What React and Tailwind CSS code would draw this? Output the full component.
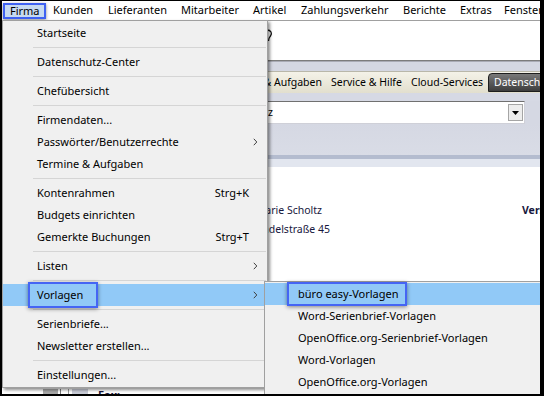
import React from 'react';

const topMenu = [
  { label: 'Firma', w: 43 },
  { label: 'Kunden', w: 55 },
  { label: 'Lieferanten', w: 73 },
  { label: 'Mitarbeiter', w: 72 },
  { label: 'Artikel', w: 48 },
  { label: 'Zahlungsverkehr', w: 102 },
  { label: 'Berichte', w: 57 },
  { label: 'Extras', w: 44 },
  { label: 'Fenster', w: 60 },
];

const firmaItems = [
  { label: 'Startseite' },
  { sep: true },
  { label: 'Datenschutz-Center' },
  { sep: true },
  { label: 'Chefübersicht' },
  { sep: true },
  { label: 'Firmendaten...' },
  { label: 'Passwörter/Benutzerrechte', sub: true },
  { label: 'Termine & Aufgaben' },
  { sep: true },
  { label: 'Kontenrahmen', shortcut: 'Strg+K' },
  { label: 'Budgets einrichten' },
  { label: 'Gemerkte Buchungen', shortcut: 'Strg+T' },
  { sep: true },
  { label: 'Listen', sub: true },
  { sep: true },
  { label: 'Vorlagen', sub: true, active: true },
  { sep: true },
  { label: 'Serienbriefe...' },
  { label: 'Newsletter erstellen...' },
  { sep: true },
  { label: 'Einstellungen...' },
];

const vorlagenItems = [
  'büro easy-Vorlagen',
  'Word-Serienbrief-Vorlagen',
  'OpenOffice.org-Serienbrief-Vorlagen',
  'Word-Vorlagen',
  'OpenOffice.org-Vorlagen',
];

const Chevron = () => (
  <svg width="5" height="8" viewBox="0 0 5 8">
    <path d="M0.8 0.8 L3.8 4 L0.8 7.2" fill="none" stroke="#404040" strokeWidth="1" />
  </svg>
);

const App = () => {
  return (
    <div className="relative w-[544px] h-[396px] overflow-hidden bg-white font-['Noto_Sans',sans-serif] text-black">
      {/* Menubar */}
      <div className="flex h-[21px] border-b border-[#a0a0a0] pl-[3px] text-[11px]">
        {topMenu.map((m, i) =>
          i === 0 ? (
            <div
              key={m.label}
              className="mt-[3px] flex h-[16px] w-[43px] shrink-0 items-center border-2 border-[#3f62f2] bg-[#c6daf1] pl-[5px] shadow-[0_1px_3px_rgba(0,0,0,0.45)]"
            >
              {m.label}
            </div>
          ) : (
            <div key={m.label} style={{ width: m.w }} className="flex shrink-0 items-center pl-[7px] whitespace-nowrap">
              {m.label}
            </div>
          )
        )}
      </div>

      {/* Toolbar area */}
      <div className="relative h-[39px] bg-white">
        <svg className="absolute left-[266px] top-[8px]" width="8" height="14" viewBox="0 0 8 14">
          <path d="M1 1 C5 1 6.5 4.5 4.5 7 C3.5 8.2 2.5 9 2.5 12" fill="none" stroke="#111" strokeWidth="1.3" />
        </svg>
      </div>
      <div className="h-[1px] bg-[#7c7c7c]" />
      <div className="h-[1px] bg-[#a9abb5]" />
      <div className="h-[9px] bg-[#d4d7e2]" />

      {/* Tab strip */}
      <div className="flex h-[22px] border-t border-[#b9b7a9] bg-gradient-to-b from-[#f4f2e8] to-[#e2dfce] text-[10.5px]">
        <div className="flex w-[329px] shrink-0 items-center justify-end pr-[7px] whitespace-nowrap">Termine &amp; Aufgaben</div>
        <div className="flex w-[80px] shrink-0 items-center pl-[2px] whitespace-nowrap">Service &amp; Hilfe</div>
        <div className="flex w-[79px] shrink-0 items-center pl-[2px] whitespace-nowrap">Cloud-Services</div>
        <div className="mt-[1px] flex h-[19px] w-[70px] shrink-0 items-center rounded-tl-[4px] border border-[#1e1e1e] bg-gradient-to-b from-[#7a7a7a] to-[#3e3e3e] pl-[5px] text-white whitespace-nowrap">
          Datenschutz
        </div>
      </div>
      <div className="h-[8px] bg-[#d6d9e4]" />

      {/* Combo row */}
      <div className="flex h-[23px] bg-[#d5d8e3]">
        <div className="flex h-full w-[525px] items-center border border-[#cfd0d8] border-t-[#707070] bg-white text-[10.5px]">
          <span className="w-[272px] shrink-0 text-right whitespace-nowrap">Marie Scholtz</span>
          <div className="ml-auto mr-[1px] flex h-[17px] w-[15px] items-center justify-center border border-[#a5a5a5] bg-[#ededed]">
            <svg width="7" height="4" viewBox="0 0 7 4">
              <path d="M0 0 H7 L3.5 4 Z" fill="#000" />
            </svg>
          </div>
        </div>
      </div>
      <div className="h-[31px] bg-gradient-to-b from-[#d5d8e3] to-[#d9dce6]" />
      <div className="h-[4px] bg-[#b4bccf]" />
      <div className="h-[8px] bg-[#e2e6ef]" />

      {/* Content */}
      <div className="flex h-[229px] flex-col bg-white pt-[34px] text-[10.5px] text-[#17173d]">
        <div className="flex h-[19px] items-center whitespace-nowrap">
          <span className="w-[322px] shrink-0 text-right">Marie Scholtz</span>
          <span className="ml-[200px] font-bold">Versand</span>
        </div>
        <div className="flex h-[19px] items-center whitespace-nowrap">
          <span className="w-[330px] shrink-0 text-right">Mendelstraße 45</span>
        </div>
        <div className="mt-auto flex h-[9px] items-start pt-[2px]">
          <div className="ml-[43px] h-full w-[15px] bg-[#a9a9a9]" />
          <div className="ml-[2px] h-full w-[1px] bg-[#7a7a7a]" />
          <div className="ml-[7px] h-full w-[1px] bg-[#9a9a9a]" />
          <div className="ml-[3px] h-full w-[16px] bg-[#c9ccd7]" />
          <span className="ml-[10px] text-[11px] font-bold leading-none text-[#17173d]">Fax:</span>
        </div>
      </div>

      {/* Firma dropdown */}
      <div className="absolute left-[2px] top-[20px] z-10 w-[266px] border border-[#a0a0a0] bg-[#f0f0f0] py-[1px] text-[11px] shadow-[2px_2px_3px_rgba(0,0,0,0.45)]">
        {firmaItems.map((it, i) =>
          it.sep ? (
            <div key={i} className="flex h-[7px] items-center pl-[30px] pr-[1px]">
              <div className="h-px flex-1 bg-[#d5d5d5]" />
            </div>
          ) : (
            <div
              key={i}
              className={`flex h-[22px] items-center pl-[34px] whitespace-nowrap ${it.active ? 'bg-[#91c9f7]' : ''}`}
            >
              {it.active ? (
                <span className="relative -ml-[9px] flex h-[26px] w-[70px] shrink-0 items-center border-2 border-[#4565f4] pl-[7px] shadow-[0_1px_4px_rgba(0,0,0,0.45)]">
                  {it.label}
                </span>
              ) : (
                <span>{it.label}</span>
              )}
              <span className="ml-auto">{it.shortcut}</span>
              <span className="flex w-[18px] shrink-0 items-center pl-[4px]">{it.sub && <Chevron />}</span>
            </div>
          )
        )}
      </div>

      {/* Vorlagen submenu */}
      <div className="absolute left-[264px] top-[281px] z-20 w-[290px] border border-[#a0a0a0] bg-[#f0f0f0] py-[1px] text-[11px]">
        {vorlagenItems.map((label, i) => (
          <div key={label} className={`flex h-[22px] items-center pl-[33px] whitespace-nowrap ${i === 0 ? 'bg-[#91c9f7]' : ''}`}>
            {i === 0 ? (
              <span className="relative -ml-[11px] flex h-[24px] w-[120px] shrink-0 items-center border-2 border-[#4565f4] pl-[9px] shadow-[0_1px_4px_rgba(0,0,0,0.45)]">
                {label}
              </span>
            ) : (
              <span>{label}</span>
            )}
          </div>
        ))}
      </div>

      {/* Screenshot frame */}
      <div className="pointer-events-none absolute inset-0 z-30 border-t border-l-2 border-r-4 border-b-2 border-black" />
    </div>
  );
};

export default App;
